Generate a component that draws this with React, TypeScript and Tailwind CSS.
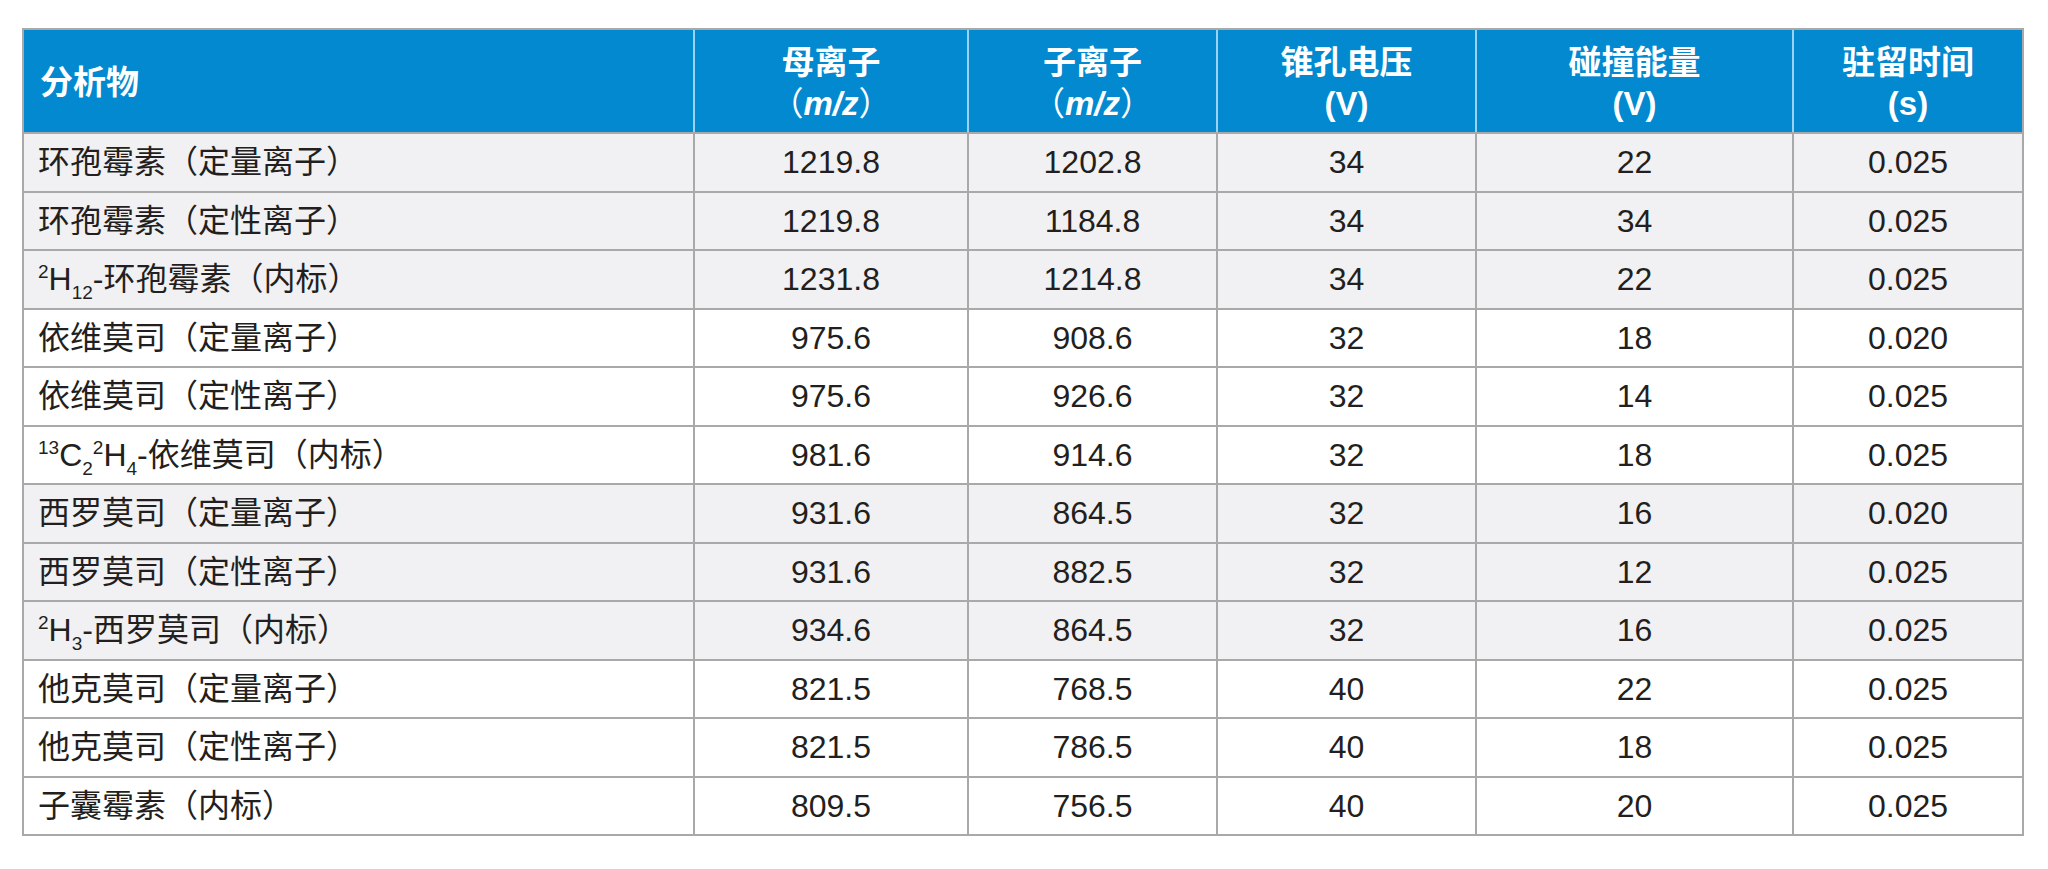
import React from "react";

type Row = { name: React.ReactNode; v: string[]; gray: boolean };

const Sup = ({ children }: { children: React.ReactNode }) => (
  <span className="text-[19px] leading-none align-[12px]">{children}</span>
);
const Sub = ({ children }: { children: React.ReactNode }) => (
  <span className="text-[19px] leading-none align-[-9px]">{children}</span>
);

const rows: Row[] = [
  { name: "环孢霉素（定量离子）", v: ["1219.8", "1202.8", "34", "22", "0.025"], gray: true },
  { name: "环孢霉素（定性离子）", v: ["1219.8", "1184.8", "34", "34", "0.025"], gray: true },
  {
    name: (
      <>
        <Sup>2</Sup>H<Sub>12</Sub>-环孢霉素（内标）
      </>
    ),
    v: ["1231.8", "1214.8", "34", "22", "0.025"],
    gray: true,
  },
  { name: "依维莫司（定量离子）", v: ["975.6", "908.6", "32", "18", "0.020"], gray: false },
  { name: "依维莫司（定性离子）", v: ["975.6", "926.6", "32", "14", "0.025"], gray: false },
  {
    name: (
      <>
        <Sup>13</Sup>C<Sub>2</Sub>
        <Sup>2</Sup>H<Sub>4</Sub>-依维莫司（内标）
      </>
    ),
    v: ["981.6", "914.6", "32", "18", "0.025"],
    gray: false,
  },
  { name: "西罗莫司（定量离子）", v: ["931.6", "864.5", "32", "16", "0.020"], gray: true },
  { name: "西罗莫司（定性离子）", v: ["931.6", "882.5", "32", "12", "0.025"], gray: true },
  {
    name: (
      <>
        <Sup>2</Sup>H<Sub>3</Sub>-西罗莫司（内标）
      </>
    ),
    v: ["934.6", "864.5", "32", "16", "0.025"],
    gray: true,
  },
  { name: "他克莫司（定量离子）", v: ["821.5", "768.5", "40", "22", "0.025"], gray: false },
  { name: "他克莫司（定性离子）", v: ["821.5", "786.5", "40", "18", "0.025"], gray: false },
  { name: "子囊霉素（内标）", v: ["809.5", "756.5", "40", "20", "0.025"], gray: false },
];

const cols = "grid grid-cols-[669px_274px_249px_259px_317px_230px]";

const MZ = () => (
  <span className="[font-feature-settings:'halt']">
    <span className="font-normal">（</span>
    <i>m/z</i>
    <span className="font-normal">）</span>
  </span>
);

const HeadCell = ({ top, bottom }: { top: string; bottom: React.ReactNode }) => (
  <div className="flex flex-col items-center justify-center border-l-2 border-[#9ad3f1] pt-[4px] leading-[41px]">
    <div>{top}</div>
    <div>{bottom}</div>
  </div>
);

export default function App() {
  return (
    <div
      className="min-h-[869px] w-[2048px] bg-white pt-[28px] pl-[22px]"
      style={{ fontFamily: '"Liberation Sans", "Noto Sans CJK SC", sans-serif' }}
    >
      <div className="w-[2002px] border-2 border-[#a9a9a9]">
        <div className={`${cols} h-[102px] bg-[#0289cf] text-[33px] font-bold text-white`}>
          <div className="flex items-center pl-[16px] pt-[4px]">分析物</div>
          <HeadCell top="母离子" bottom={<MZ />} />
          <HeadCell top="子离子" bottom={<MZ />} />
          <HeadCell top="锥孔电压" bottom="(V)" />
          <HeadCell top="碰撞能量" bottom="(V)" />
          <HeadCell top="驻留时间" bottom="(s)" />
        </div>
        {rows.map((r, i) => (
          <div
            key={i}
            className={`${cols} h-[58.5px] border-t-2 border-[#a9a9a9] text-[32px] text-[#231f20] ${
              r.gray ? "bg-[#f1f1f3]" : "bg-white"
            }`}
          >
            <div className="flex items-center whitespace-nowrap pl-[14px]">
              <span>{r.name}</span>
            </div>
            {r.v.map((x, j) => (
              <div key={j} className="flex items-center justify-center border-l-2 border-[#a9a9a9]">
                {x}
              </div>
            ))}
          </div>
        ))}
      </div>
    </div>
  );
}
